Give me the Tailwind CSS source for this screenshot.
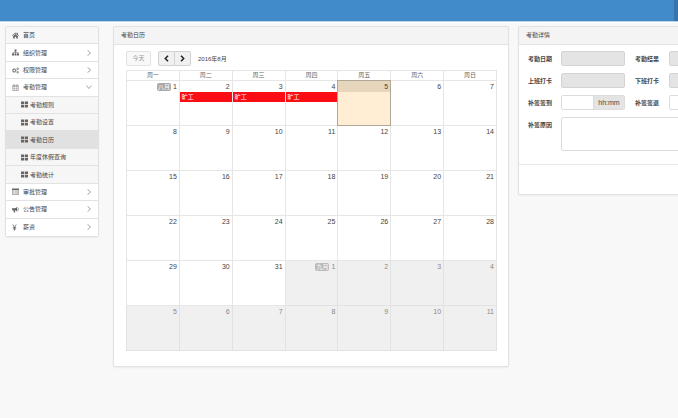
<!DOCTYPE html>
<html lang="zh-CN">
<head>
  <meta charset="UTF-8" />
  <meta name="viewport" content="width=device-width, initial-scale=1" />
  <title>考勤日历</title>
  <script src="https://cdn.jsdelivr.net/npm/@tailwindcss/browser@4"></script>
</head>
<body class="bg-[#f8f8f8] text-[#444] text-[6px] leading-[10px] font-['Liberation_Sans','Noto_Sans_CJK_SC',sans-serif] min-h-screen overflow-x-hidden">

  <header class="flex justify-end h-[22px] bg-[#428bca] border-b border-[#b9d3e9]">
    <div class="w-1 bg-[#3874a9]"></div>
  </header>

  <div class="flex items-start pl-[5px] pt-[3px] border-t border-white">

    <!-- Sidebar -->
    <nav class="w-[94px] shrink-0 mr-[14px]">
      <ul id="menu" class="grid auto-rows-fr h-[211px] bg-white border border-[#e2e2e2] rounded-xs shadow-xs divide-y divide-[#e2e2e2]"></ul>
    </nav>

    <!-- Calendar -->
    <main class="flex-1 min-w-0 mr-[9px] bg-white border border-[#e2e2e2] rounded-xs shadow-xs">
      <h2 class="h-[18px] px-[7px] leading-[17px] bg-[#f4f4f4] border-b border-[#e4e4e4]">考勤日历</h2>
      <div class="pl-3 pr-[11px] pt-[6px] pb-[15px]">
        <div class="flex items-center mb-1">
          <button type="button" class="w-[25px] h-[15px] mr-[7px] leading-[13px] bg-[#f8f8f8] border border-[#e2e2e2] rounded-xs text-[#999]">今天</button>
          <button type="button" aria-label="上个月" class="flex items-center justify-center w-[17px] h-[15px] bg-[#f0f0f0] border border-[#d2d2d2] rounded-l-xs">
            <svg class="w-[5px] h-[7px]" viewBox="0 0 5 7" fill="none" stroke="#222" stroke-width="1.5"><path d="M4 .8 1.3 3.5 4 6.2" /></svg>
          </button>
          <button type="button" aria-label="下个月" class="flex items-center justify-center w-4 h-[15px] bg-[#f0f0f0] border border-l-0 border-[#d2d2d2] rounded-r-xs">
            <svg class="w-[5px] h-[7px]" viewBox="0 0 5 7" fill="none" stroke="#222" stroke-width="1.5"><path d="M1 .8 3.7 3.5 1 6.2" /></svg>
          </button>
          <span class="ml-[7px]">2016年8月</span>
        </div>
        <table class="w-full table-fixed border-collapse">
          <thead>
            <tr class="h-[10px] text-[#666]">
              <th class="p-0 border border-[#e6e6e6] font-normal leading-[9px]">周一</th>
              <th class="p-0 border border-[#e6e6e6] font-normal leading-[9px]">周二</th>
              <th class="p-0 border border-[#e6e6e6] font-normal leading-[9px]">周三</th>
              <th class="p-0 border border-[#e6e6e6] font-normal leading-[9px]">周四</th>
              <th class="p-0 border border-[#e6e6e6] font-normal leading-[9px]">周五</th>
              <th class="p-0 border border-[#e6e6e6] font-normal leading-[9px]">周六</th>
              <th class="p-0 border border-[#e6e6e6] font-normal leading-[9px]">周日</th>
            </tr>
          </thead>
          <tbody id="days"></tbody>
        </table>
      </div>
    </main>

    <!-- Details, runs on past the window's edge -->
    <section class="w-[160px] shrink-0 overflow-hidden bg-white border border-r-0 border-[#e2e2e2] rounded-l-xs shadow-xs">
      <h2 class="h-[18px] px-[7px] leading-[17px] bg-[#f4f4f4] border-b border-[#e4e4e4]">考勤详情</h2>
      <form class="w-[224px]">
        <div class="grid grid-cols-[23px_64px_24px_64px] items-center gap-x-[10px] gap-y-[7px] pl-[9px] pt-[6px] pb-[13px]">
          <label for="date" class="font-bold whitespace-nowrap">考勤日期</label>
          <input id="date" type="text" disabled class="w-full h-[15px] px-1 bg-[#e4e4e4] border border-[#d4d4d4] rounded-xs" />
          <label for="status" class="font-bold whitespace-nowrap">考勤结果</label>
          <input id="status" type="text" disabled class="w-full h-[15px] px-1 bg-[#e4e4e4] border border-[#d4d4d4] rounded-xs" />

          <label for="in" class="font-bold whitespace-nowrap">上班打卡</label>
          <input id="in" type="text" disabled class="w-full h-[15px] px-1 bg-[#e4e4e4] border border-[#d4d4d4] rounded-xs" />
          <label for="out" class="font-bold whitespace-nowrap">下班打卡</label>
          <input id="out" type="text" disabled class="w-full h-[15px] px-1 bg-[#e4e4e4] border border-[#d4d4d4] rounded-xs" />

          <label for="signin" class="font-bold whitespace-nowrap">补签签到</label>
          <div class="flex h-[15px] border border-[#dcdcdc] rounded-xs">
            <input id="signin" type="text" class="flex-1 min-w-0 px-1" />
            <span class="w-[31px] bg-[#e4e4e4] border-l border-[#dcdcdc] text-center text-[7px] leading-[13px]">hh:mm</span>
          </div>
          <label for="signout" class="font-bold whitespace-nowrap">补签签退</label>
          <input id="signout" type="text" class="w-full h-[15px] px-1 border border-[#dcdcdc] rounded-xs" />

          <label for="reason" class="self-start pt-[3px] font-bold whitespace-nowrap">补签原因</label>
          <textarea id="reason" class="col-span-3 block w-full h-[34px] p-1 border border-[#dcdcdc] rounded-xs resize-none"></textarea>
        </div>
        <div class="h-[30px] border-t border-[#e8e8e8]"></div>
      </form>
    </section>
  </div>

  <script>
    const icons = {
      home: '<path d="M0 7.2 7 1l2.6 2.3V1.6h2v3.5L14 7.2l-.9 1L7 2.9.9 8.2z"/><path d="M2.2 8.4 7 4.2l4.8 4.2v4.4H8.4V9.4H5.6v3.4H2.2z"/>',
      sitemap: '<path d="M5 1h4v4H7.6v1.5h4.9V9H14v4h-4V9h1.3V7.7H7.6V9H9v4H5V9h1.4V7.7H2.7V9H4v4H0V9h1.5V6.5h4.9V5H5z"/>',
      cogs: '<g fill="none" stroke="#666"><circle cx="4.5" cy="7" r="2.8" stroke-width="2"/><circle cx="4.5" cy="7" r="4" stroke-width="1" stroke-dasharray="1.6 1.5"/><circle cx="11.3" cy="3.6" r="1.6" stroke-width="1.5"/><circle cx="11.3" cy="10.6" r="1.6" stroke-width="1.5"/></g>',
      calendar: '<path fill="none" stroke="#666" d="M1.5 2.5h11v10.500h-11zM1.500 5h11M4 .5v3M10 .5v3"/><path fill="none" stroke="#999" d="M5 5v8M9 5v8M2 9h10"/>',
      grid: '<path d="M0 1h6.300v5.400H0zM7.700 1H14v5.400H7.700zM0 7.800h6.300v5.400H0zM7.700 7.800H14v5.400H7.700z"/>',
      table: '<path fill-rule="evenodd" d="M0 1h14v12H0zM1 4h12v8H1z"/><path fill="#999" d="M2 5h2v1.300H2zM5 5h7v1.300H5zM2 7.300h2v1.300H2zM5 7.300h7v1.300H5zM2 9.600h2v1.300H2zM5 9.600h7v1.300H5z"/>',
      horn: '<path d="M0 4.500h5.500c2-.2 3.500-1.300 5-3v10c-1.500-1.700-3-2.500-4.800-2.800L6.500 13H3.800L2.800 8.700H0z"/><path fill="none" stroke="#666" d="M12 3.500c1.800 1.600 1.800 4.400 0 6"/>',
      yen: '<path fill="none" stroke="#666" stroke-width="1.600" d="M1.500 1 5 6.800 8.500 1M5 6.800V13M1.800 7.300h6.400M1.800 9.800h6.400"/>'
    };

    const menu = [
      { icon: 'home', text: '首页', bg: 'bg-[#f7f7f7]' },
      { icon: 'sitemap', text: '组织管理', arrow: 'right' },
      { icon: 'cogs', text: '权限管理', arrow: 'right' },
      { icon: 'calendar', text: '考勤管理', arrow: 'down' },
      { icon: 'grid', text: '考勤规则', sub: true, bg: 'bg-[#f6f6f6]' },
      { icon: 'grid', text: '考勤设置', sub: true, bg: 'bg-[#f6f6f6]' },
      { icon: 'grid', text: '考勤日历', sub: true, bg: 'bg-[#e1e1e1]' },
      { icon: 'grid', text: '年度休假查询', sub: true, bg: 'bg-[#f6f6f6]' },
      { icon: 'grid', text: '考勤统计', sub: true, bg: 'bg-[#f6f6f6]' },
      { icon: 'table', text: '审批管理', arrow: 'right' },
      { icon: 'horn', text: '公告管理', arrow: 'right' },
      { icon: 'yen', text: '薪资', arrow: 'right' }
    ];

    const arrows = {
      right: '<svg class="w-[6px] h-[6px] ml-auto" viewBox="0 0 6 6" fill="none" stroke="#888" stroke-width=".8"><path d="M1.500 .3 4.500 3 1.500 5.700"/></svg>',
      down: '<svg class="w-[6px] h-[6px] ml-auto" viewBox="0 0 6 6" fill="none" stroke="#888" stroke-width=".8"><path d="M.3 1.500 3 4.500 5.700 1.500"/></svg>'
    };

    document.getElementById('menu').innerHTML = menu.map(m => `
      <li class="${m.bg || 'bg-white'}">
        <a href="#" class="flex items-center h-full pr-[6px] ${m.sub ? 'pl-[15px] gap-[2px]' : 'pl-[6px] gap-1'}">
          <svg class="w-[7px] h-[7px]" viewBox="0 0 14 14" fill="#666">${icons[m.icon]}</svg>
          <span>${m.text}</span>
          ${m.arrow ? arrows[m.arrow] : ''}
        </a>
      </li>`).join('');

    // 2016-08-01 is a Monday, so the 42 cells start on it
    let rows = '';
    for (let w = 0; w < 6; w++) {
      rows += '<tr class="h-[45px]">';
      for (let d = 1; d <= 7; d++) {
        const n = w * 7 + d;
        const other = n > 31;
        const today = n === 5;
        const month = n === 1 ? '八月' : n === 32 ? '九月' : '';
        rows += `
          <td class="p-0 align-top ${today ? 'border border-double border-[#b0a894] bg-[#ffeed4]' : other ? 'border border-[#e2e2e2] bg-[#f0f0f0] text-[#888]' : 'border border-[#e6e6e6]'}">
            <div class="flex justify-end items-center gap-[2px] h-[11px] pr-[2px] text-[7px] ${today ? 'bg-[#e6d6bc]' : ''}">
              ${month ? `<span class="px-px text-[6px] leading-[8px] rounded-xs text-white ${other ? 'bg-[#bbb]' : 'bg-[#aaa]'}">${month}</span>` : ''}
              <span>${other ? n - 31 : n}</span>
            </div>
            ${n >= 2 && n <= 4 ? '<div class="h-[10px] pl-[2px] bg-[#fb0d16] text-white">旷工</div>' : ''}
          </td>`;
      }
      rows += '</tr>';
    }
    document.getElementById('days').innerHTML = rows;
  </script>
</body>
</html>
